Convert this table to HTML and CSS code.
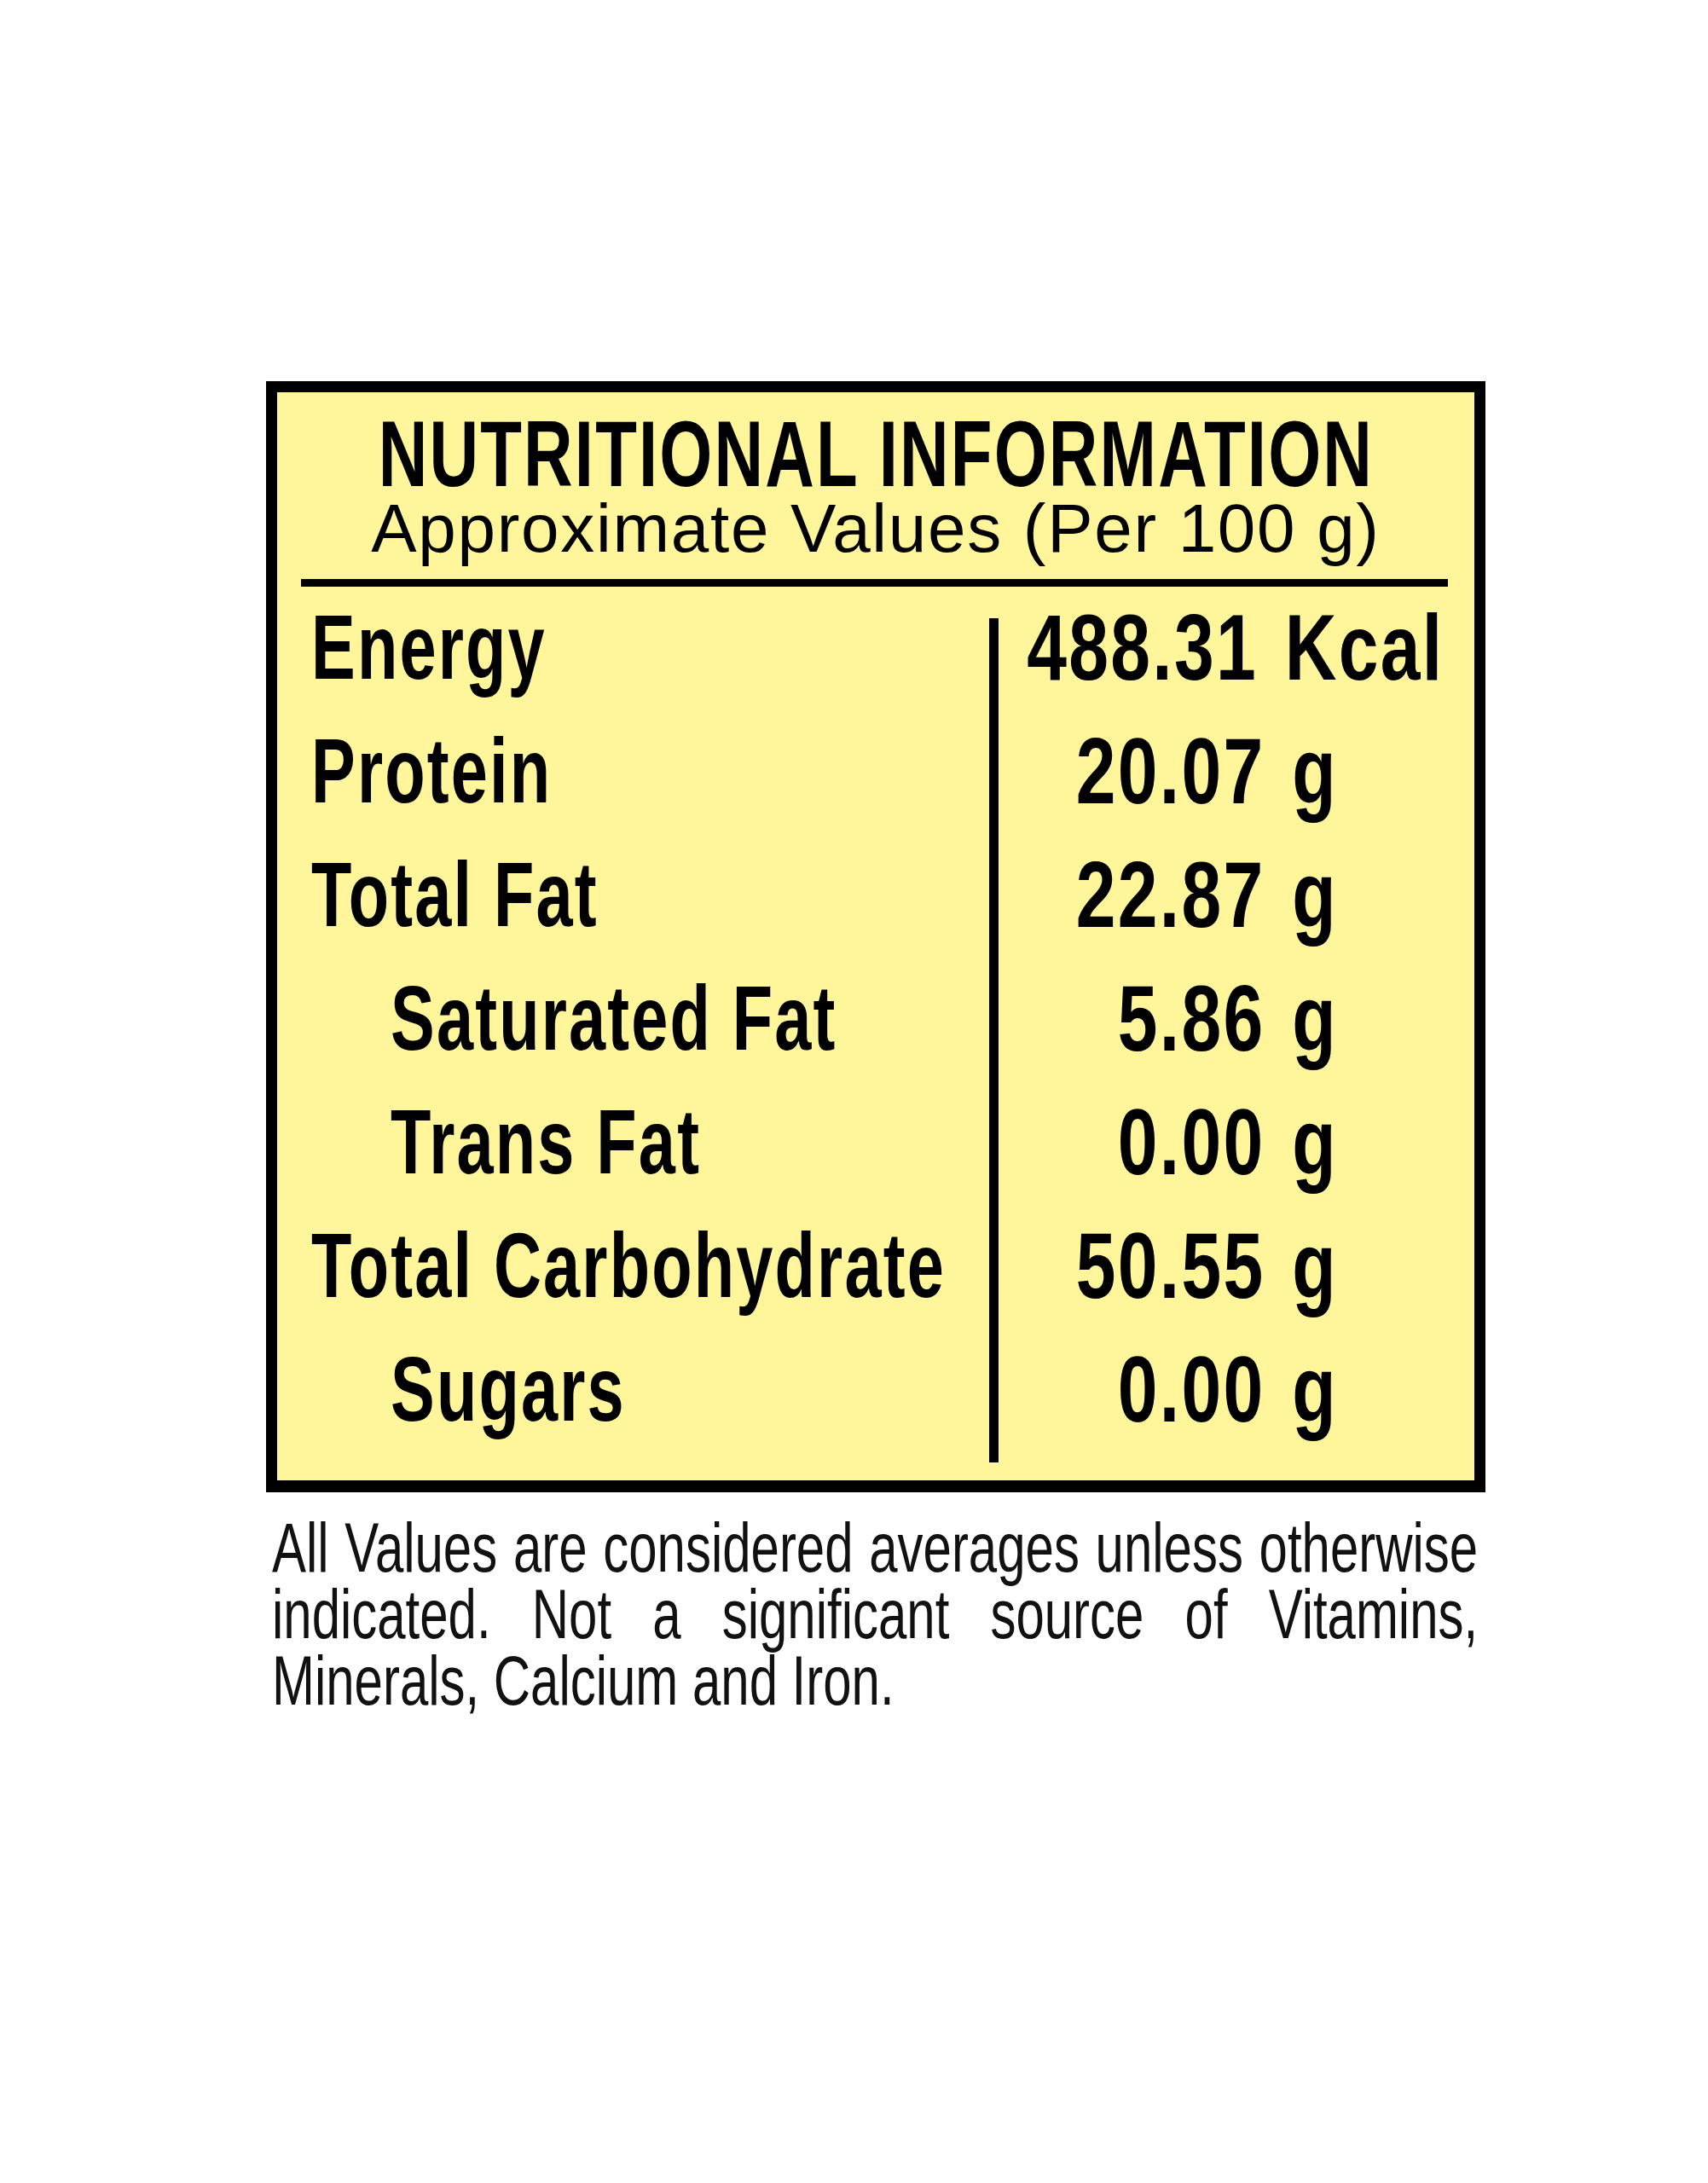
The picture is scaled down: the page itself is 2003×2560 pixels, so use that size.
FILE: index.html
```html
<!DOCTYPE html>
<html lang="en">
<head>
<meta charset="utf-8">
<title>Nutritional Information</title>
<link rel="stylesheet" href="styles.css">
</head>
<body>
<main class="label">
  <section class="panel">
    <header class="panel-head">
      <h1 class="title"><span class="cond">NUTRITIONAL INFORMATION</span></h1>
      <p class="subtitle">Approximate Values (Per 100 g)</p>
    </header>
    <div class="rule"></div>
    <div class="facts">
      <div class="name"><span class="cond">Energy</span></div>
      <div class="val"><span class="cond"><span class="num num-energy">488.31</span> Kcal</span></div>

      <div class="name"><span class="cond">Protein</span></div>
      <div class="val"><span class="cond"><span class="num">20.07</span> g</span></div>

      <div class="name"><span class="cond">Total Fat</span></div>
      <div class="val"><span class="cond"><span class="num">22.87</span> g</span></div>

      <div class="name sub"><span class="cond">Saturated Fat</span></div>
      <div class="val"><span class="cond"><span class="num">5.86</span> g</span></div>

      <div class="name sub"><span class="cond">Trans Fat</span></div>
      <div class="val"><span class="cond"><span class="num">0.00</span> g</span></div>

      <div class="name"><span class="cond">Total Carbohydrate</span></div>
      <div class="val"><span class="cond"><span class="num">50.55</span> g</span></div>

      <div class="name sub"><span class="cond">Sugars</span></div>
      <div class="val"><span class="cond"><span class="num">0.00</span> g</span></div>

      <div class="divider"></div>
    </div>
  </section>
  <div class="note-wrap">
    <p class="note">All Values are considered averages unless otherwise indicated. Not a significant source of Vitamins, Minerals, Calcium and Iron.</p>
  </div>
</main>
</body>
</html>
```

FILE: styles.css
```css
html, body {
  margin: 0;
  padding: 0;
  background: #ffffff;
}

body {
  font-family: "Liberation Sans", Arial, sans-serif;
  color: #000;
}

.label {
  padding: 447px 0 0 312px;
  width: 1430px;
}

.panel {
  box-sizing: border-box;
  width: 1430px;
  border: 13px solid #000;
  border-bottom-width: 14px;
  background: #fff59b;
}

.cond {
  display: inline-block;
  white-space: nowrap;
  transform-origin: left center;
}

/* ---------- header ---------- */
.panel-head {
  padding-top: 24px;
  display: flex;
  flex-direction: column;
  align-items: center;
}

.title {
  margin: 0;
  font-size: 109px;
  line-height: 96px;
  font-weight: 700;
  white-space: nowrap;
}

.title .cond {
  letter-spacing: 3px;
  transform: scaleX(0.731);
  transform-origin: center center;
}

.subtitle {
  margin: 0;
  font-size: 80px;
  line-height: 80px;
  letter-spacing: 1.7px;
  white-space: nowrap;
}

.rule {
  height: 9px;
  margin: 19px 31px 0 28px;
  background: #000;
}

/* ---------- facts table ---------- */
.facts {
  display: grid;
  grid-template-columns: 835px 11px 1fr;
  grid-auto-rows: 145px;
  margin-top: -2px;
  padding-bottom: 35px;
  line-height: 145px;
  font-weight: 700;
}

.name {
  grid-column: 1;
  padding-left: 40px;
  font-size: 108px;
  white-space: nowrap;
}

.name.sub {
  padding-left: 133px;
}

.name .cond {
  letter-spacing: 3px;
  transform: scaleX(0.718);
}

.val {
  grid-column: 3;
  font-size: 110px;
  white-space: nowrap;
}

.val .cond {
  letter-spacing: 3px;
  word-spacing: 8px;
  transform: scaleX(0.764);
}

.num {
  display: inline-block;
  width: 409px;
  text-align: right;
}

.num-energy {
  width: 398px;
}

.divider {
  grid-column: 2;
  grid-row: 1 / 8;
  margin-top: 39px;
  margin-bottom: -14px;
  background: #000;
}

/* ---------- footnote ---------- */
.note-wrap {
  margin: 26px 0 0 7px;
  width: 1414px;
}

.note {
  margin: 0;
  width: 1911px;
  font-size: 81px;
  line-height: 78px;
  text-align: justify;
  color: #111;
  transform: scaleX(0.74);
  transform-origin: left top;
}
```
